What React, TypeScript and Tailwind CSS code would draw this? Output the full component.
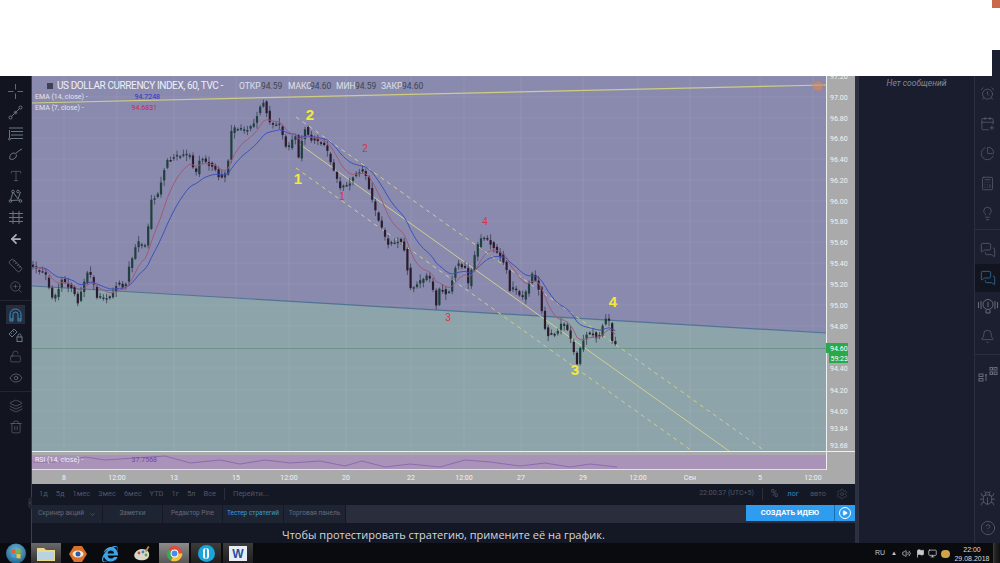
import {
  AlarmClock,
  ArrowLeft,
  Bell,
  Bug,
  Calculator,
  ChevronDown,
  ChevronLeft,
  CircleHelp,
  Eye,
  Layers,
  Lightbulb,
  LockOpen,
  MessagesSquare,
  PieChart,
  Play,
  Ruler,
  Settings,
  Trash2,
  Type,
  ZoomIn,
  CalendarPlus,
  Volume2,
  Flag,
  Monitor,
} from "lucide-react";
import { FaInternetExplorer } from "react-icons/fa";
import type { ReactNode } from "react";

// price path of the hourly candles, in chart pixels
const pricePath: [number, number][] = [
  [32, 266], [40, 271], [45, 273], [53, 302], [58, 290], [62, 280], [67, 285], [73, 289], [78, 302],
  [83, 285], [88, 270], [93, 282], [97, 298], [110, 298], [117, 283], [125, 287], [128, 270], [133, 255],
  [137, 242], [147, 247], [150, 200], [157, 198], [162, 177], [167, 160], [177, 155], [190, 155],
  [195, 178], [200, 158], [217, 170], [220, 180], [227, 170], [232, 127], [240, 130], [248, 130],
  [253, 125], [263, 100], [270, 123], [280, 125], [287, 152], [295, 133], [298, 162], [304, 127],
  [310, 138], [323, 143], [328, 153], [333, 170], [340, 188], [348, 185], [358, 170], [365, 172],
  [372, 200], [380, 225], [388, 245], [400, 240], [407, 255], [408, 290], [418, 283], [428, 275],
  [433, 290], [436, 308], [438, 290], [445, 290], [447, 300], [453, 275], [457, 262], [465, 268],
  [468, 285], [473, 262], [480, 238], [488, 240], [495, 250], [500, 255], [507, 270], [509, 290],
  [515, 287], [522, 300], [527, 290], [532, 275], [538, 285], [543, 320], [547, 335], [557, 332],
  [560, 325], [565, 323], [572, 345], [577, 365], [580, 350], [585, 335], [593, 333], [598, 340],
  [602, 325], [608, 315], [612, 340], [617, 348],
];

const rsiPath: [number, number][] = [
  [33, 462], [60, 462], [85, 457], [105, 460], [135, 458], [165, 456], [190, 463], [220, 460],
  [240, 464], [265, 460], [290, 463], [320, 461], [345, 466], [362, 461], [385, 467], [410, 464],
  [440, 467], [465, 460], [490, 462], [520, 466], [545, 463], [570, 467], [590, 464], [617, 467],
];

const yAt = (x: number) => {
  for (let i = 1; i < pricePath.length; i++) {
    const [x0, y0] = pricePath[i - 1];
    const [x1, y1] = pricePath[i];
    if (x <= x1) return y0 + ((y1 - y0) * (x - x0)) / (x1 - x0);
  }
  return pricePath[pricePath.length - 1][1];
};

// fixed wobble so the candles come out the same on every render
const wobble = (i: number) => Math.sin(i * 12.9898) * 0.5 + Math.sin(i * 4.1414) * 0.5;

const STEP = 3.2;

const candles = Array.from({ length: 183 }, (_, i) => {
  const x = 33 + i * STEP;
  const open = yAt(x - STEP) + wobble(i) * 2;
  const close = yAt(x) + wobble(i + 50) * 2;
  const top = Math.min(open, close) - 1 - Math.abs(wobble(i + 9)) * 5;
  const bottom = Math.max(open, close) + 1 + Math.abs(wobble(i + 23)) * 5;
  return { x, open, close, top, bottom };
});

const ema = (period: number) => {
  const k = 2 / (period + 1);
  let value = candles[0].close;
  return candles
    .map((c) => {
      value = value + (c.close - value) * k;
      return `${c.x},${value.toFixed(1)}`;
    })
    .join(" ");
};

const priceLabels: [string, number][] = [
  ["97.20", 76], ["97.00", 97], ["96.80", 118], ["96.60", 138], ["96.40", 159], ["96.20", 180],
  ["96.00", 201], ["95.80", 221], ["95.60", 242], ["95.40", 263], ["95.20", 284], ["95.00", 305],
  ["94.80", 326], ["94.40", 368], ["94.20", 390], ["94.00", 411], ["93.84", 428], ["93.68", 445],
];

const timeLabels: [string, number][] = [
  ["8", 64], ["12:00", 117], ["13", 174], ["15", 236], ["12:00", 289], ["20", 346], ["22", 411],
  ["12:00", 464], ["27", 521], ["29", 583], ["12:00", 638], ["Сен", 690], ["5", 760], ["12:00", 813],
];

const channels = [
  { x1: 296, y1: 117, x2: 765, y2: 451, dash: "4 4" },
  { x1: 298, y1: 143, x2: 729, y2: 451 },
  { x1: 296, y1: 168, x2: 692, y2: 451, dash: "4 4" },
];

const waveLabels = [
  { t: "1", x: 298, y: 184, big: true },
  { t: "2", x: 310, y: 120, big: true },
  { t: "3", x: 575, y: 375, big: true },
  { t: "4", x: 613, y: 307, big: true },
  { t: "1", x: 342, y: 200, big: false },
  { t: "2", x: 365, y: 152, big: false },
  { t: "3", x: 448, y: 321, big: false },
  { t: "4", x: 485, y: 225, big: false },
];

const PriceChart = () => (
  <svg width="823" height="408" viewBox="32 76 823 408" className="block">
    <rect x="32" y="76" width="823" height="408" fill="#aaaaaa" />
    <polygon points="32,76 826,76 826,333 32,286" fill="#8a8aae" />
    <polygon points="32,286 826,333 826,451 32,451" fill="#8da4aa" />

    {timeLabels.map(([, x], i) => (
      <line key={i} x1={x} y1="76" x2={x} y2="451" stroke="#ffffff" strokeOpacity="0.07" />
    ))}
    {priceLabels.map(([, y], i) => (
      <line key={i} x1="32" y1={y} x2="826" y2={y} stroke="#ffffff" strokeOpacity="0.06" />
    ))}

    <line x1="32" y1="286" x2="826" y2="333" stroke="#4f7396" strokeWidth="1.2" />
    <line x1="32" y1="348.5" x2="826" y2="348.5" stroke="#6d9488" />
    <line x1="32" y1="103" x2="826" y2="85" stroke="#cfcd82" strokeWidth="1.2" />
    <circle cx="818" cy="86" r="5" fill="#e08a50" fillOpacity="0.5" stroke="#d8744a" strokeOpacity="0.5" />

    {channels.map((c, i) => (
      <line
        key={i}
        x1={c.x1}
        y1={c.y1}
        x2={c.x2}
        y2={c.y2}
        stroke="#cfcf8e"
        strokeWidth="1"
        strokeDasharray={c.dash}
      />
    ))}

    {/* candles */}
    {candles.map((c) => {
      const rising = c.close < c.open;
      return (
        <g key={c.x}>
          <line x1={c.x} y1={c.top} x2={c.x} y2={c.bottom} stroke="#3a3f50" strokeWidth="0.8" />
          <rect
            x={c.x - 1.1}
            y={Math.min(c.open, c.close)}
            width="2.2"
            height={Math.max(Math.abs(c.open - c.close), 1.5)}
            fill={rising ? "#20403f" : "#2a1a2c"}
          />
        </g>
      );
    })}
    <polyline points={ema(18)} fill="none" stroke="#3f50bb" strokeWidth="1" />
    <polyline points={ema(9)} fill="none" stroke="#a05a78" strokeWidth="1" />

    {waveLabels.map((w, i) => (
      <text
        key={i}
        x={w.x}
        y={w.y}
        textAnchor="middle"
        fontFamily="'Liberation Sans', sans-serif"
        fontSize={w.big ? 15 : 10}
        fontWeight={w.big ? 700 : 400}
        fill={w.big ? "#f2e840" : "#dc3048"}
      >
        {w.t}
      </text>
    ))}

    {/* RSI pane */}
    <rect x="32" y="455" width="794" height="14" fill="#aa93b8" />
    <polyline
      points={rsiPath.map((p) => p.join(",")).join(" ")}
      fill="none"
      stroke="#8a6cae"
      strokeWidth="1"
    />
    <line x1="32" y1="451.5" x2="855" y2="451.5" stroke="#eef0f0" />
    <line x1="32" y1="469.5" x2="826" y2="469.5" stroke="#e2e2e2" />
    <line x1="826.5" y1="76" x2="826.5" y2="470" stroke="#eef0f0" />

    {/* axes */}
    {priceLabels.map(([label, y]) => (
      <text key={label} x="830" y={y + 3} fontSize="7" fill="#f2f2f2">
        {label}
      </text>
    ))}
    {timeLabels.map(([label, x], i) => (
      <text key={i} x={x} y="480" fontSize="7" fill="#f2f2f2" textAnchor="middle">
        {label}
      </text>
    ))}
    <rect x="826" y="343" width="22" height="10" fill="#2aa84a" />
    <rect x="829" y="353" width="19" height="10" fill="#2aa84a" />
    <text x="830" y="351" fontSize="7" fill="#ffffff">94.60</text>
    <text x="830.5" y="361" fontSize="7" fill="#ffffff">59:23</text>
  </svg>
);

const ChartLegend = () => (
  <>
    <div className="absolute left-[15px] top-[4px] flex items-center whitespace-nowrap text-[8.5px] leading-[12px]">
      <span className="mr-[4px] h-[6px] w-[6px] bg-[#3d4252]" />
      <span className="w-[182px] text-[10px] tracking-[-0.4px] text-[#eef0f6]">US DOLLAR CURRENCY INDEX, 60, TVC -</span>
      <span className="w-[22px] text-[#dfe0ea]">ОТКР</span>
      <span className="w-[27px] text-[#3e4656]">94.59</span>
      <span className="w-[22px] text-[#dfe0ea]">МАКС</span>
      <span className="w-[26px] text-[#3e4656]">94.60</span>
      <span className="w-[19px] text-[#dfe0ea]">МИН</span>
      <span className="w-[26px] text-[#3e4656]">94.59</span>
      <span className="w-[21px] text-[#dfe0ea]">ЗАКР</span>
      <span className="text-[#3e4656]">94.60</span>
    </div>
    <div className="absolute left-[3px] top-[17px] flex w-[140px] justify-between text-[7px] leading-[9px] text-[#e4e4ee]">
      <span>EMA (14, close) -</span>
      <span className="mr-[15px] text-[#2a35c8]">94.7248</span>
    </div>
    <div className="absolute left-[3px] top-[28px] flex w-[140px] justify-between text-[7px] leading-[9px] text-[#e4e4ee]">
      <span>EMA (7, close) -</span>
      <span className="mr-[18px] text-[#c22a4e]">94.6831</span>
    </div>
    <div className="absolute left-[3px] top-[380px] flex w-[122px] justify-between text-[7px] leading-[9px] text-[#f0f0f6]">
      <span>RSI (14, close) -</span>
      <span className="text-[#7a3fb0]">37.7568</span>
    </div>
  </>
);

const ToolIcon = ({ children, active }: { children: ReactNode; active?: boolean }) => (
  <div className="flex h-[21px] w-full items-center justify-center">
    <div
      className={`flex h-[19px] w-[19px] items-center justify-center ${
        active ? "bg-[#262d3c] text-[#3f8fc0]" : "text-[#6b7685]"
      }`}
    >
      {children}
    </div>
  </div>
);

const Crosshair = () => (
  <svg width="15" height="15" viewBox="0 0 15 15" stroke="#2b7f95" fill="none">
    <path d="M7.5 0v5.5M7.5 9.5V15M0 7.5h5.5M9.5 7.5H15" />
  </svg>
);

const TrendLine = () => (
  <svg width="15" height="15" viewBox="0 0 15 15" stroke="currentColor" fill="none">
    <path d="M3.5 11.5l8-8" />
    <circle cx="2.5" cy="12.5" r="1.5" />
    <circle cx="12.5" cy="2.5" r="1.5" />
    <circle cx="7.5" cy="7.5" r="1.3" />
  </svg>
);

const FibLines = () => (
  <svg width="16" height="15" viewBox="0 0 16 15" stroke="currentColor" fill="none">
    <path d="M1 2h14M3 5.5h12M3 9h12M3 12.5h12" />
    <path d="M1.5 4v8" />
    <circle cx="1.5" cy="13" r="1" />
  </svg>
);

const Brush = () => (
  <svg width="15" height="13" viewBox="0 0 15 13" stroke="currentColor" fill="none">
    <path d="M2 11c-1-3 1-6 4-6 2 0 3 2 2 4-1 2-4 3-6 2zM8 5l4-3 2-1" />
  </svg>
);

const PatternTool = () => (
  <svg width="15" height="15" viewBox="0 0 15 15" stroke="currentColor" fill="none">
    <path d="M2.5 11.5L5 3l5 7 2.5-7M2.5 11.5L12.5 11" />
    <circle cx="2.5" cy="12" r="1.3" />
    <circle cx="5" cy="2.5" r="1.3" />
    <circle cx="10" cy="2.5" r="1.3" />
    <circle cx="12.5" cy="12" r="1.3" />
  </svg>
);

const ForecastTool = () => (
  <svg width="16" height="15" viewBox="0 0 16 15" stroke="currentColor" fill="none">
    <path d="M1 3.5h14M1 7.5h14M1 11.5h14M5 1v13M11 1v13" />
  </svg>
);

const DrawLock = () => (
  <svg width="15" height="15" viewBox="0 0 15 15" stroke="currentColor" fill="none">
    <path d="M1 6l5-5 3 3-5 5zM2.5 4.5L4 6M4.5 2.5L6 4" />
    <rect x="9" y="9" width="5" height="4.5" />
    <path d="M10 9V7.5a1.5 1.5 0 013 0V9" />
  </svg>
);

const MagnetArch = () => (
  <svg width="13" height="14" viewBox="0 0 13 14" stroke="currentColor" fill="none">
    <path d="M1 13V6.5a5.5 5.5 0 0111 0V13H9V6.5a2.5 2.5 0 00-5 0V13z" />
    <path d="M1 11h3M9 11h3" />
  </svg>
);

const LeftToolbar = () => (
  <div className="flex w-8 shrink-0 flex-col border-r border-[#3a3f4d] bg-[#12151f] pt-[5px]">
    <ToolIcon><Crosshair /></ToolIcon>
    <ToolIcon><TrendLine /></ToolIcon>
    <ToolIcon><FibLines /></ToolIcon>
    <ToolIcon><Brush /></ToolIcon>
    <ToolIcon><Type size={14} strokeWidth={1} /></ToolIcon>
    <ToolIcon><PatternTool /></ToolIcon>
    <ToolIcon><ForecastTool /></ToolIcon>
    <ToolIcon><ArrowLeft size={14} strokeWidth={3} className="text-[#aab2bc]" /></ToolIcon>
    <div className="mt-[6px]">
      <ToolIcon><Ruler size={15} strokeWidth={1} className="text-[#7b8592]" /></ToolIcon>
      <ToolIcon><ZoomIn size={14} strokeWidth={1} /></ToolIcon>
    </div>
    <div className="mt-[3px] border-t border-[#232733] pt-[3px]">
      <ToolIcon active><MagnetArch /></ToolIcon>
      <ToolIcon><DrawLock /></ToolIcon>
      <ToolIcon><LockOpen size={13} strokeWidth={1} /></ToolIcon>
      <ToolIcon><Eye size={14} strokeWidth={1} className="text-[#7b8592]" /></ToolIcon>
    </div>
    <div className="mt-[3px] border-t border-[#232733] pt-[3px]">
      <ToolIcon><Layers size={14} strokeWidth={1} /></ToolIcon>
      <ToolIcon><Trash2 size={14} strokeWidth={1} /></ToolIcon>
    </div>
  </div>
);

const ChartControls = () => (
  <div className="relative flex h-[19px] items-center bg-[#141824] pl-[7px] pr-[7px] text-[7.5px] text-[#4f5664]">
    <div className="flex gap-[8px] pr-[8px]">
      {["1д", "5д", "1мес", "3мес", "6мес", "YTD", "1г", "5л", "Все"].map((r) => (
        <span key={r}>{r}</span>
      ))}
    </div>
    <span className="h-[12px] border-l border-[#2a2e3b]" />
    <span className="ml-[8px]">Перейти...</span>
    <span className="ml-auto text-[7px]">22:00:37 (UTC+5)</span>
    <span className="ml-[8px] h-[12px] border-l border-[#2a2e3b]" />
    <span className="ml-[8px] text-[10px]">%</span>
    <span className="ml-[9px] text-[#2f83ba]">лог</span>
    <span className="ml-[11px]">авто</span>
    <Settings size={12} strokeWidth={1} className="ml-[10px]" />
    <div className="absolute bottom-[-6px] left-[-4px] flex h-[12px] w-[4px] items-center justify-center rounded-l-sm bg-[#232733]">
      <ChevronLeft size={6} className="text-[#8a909c]" />
    </div>
  </div>
);

const tabs = [
  { label: "Скринер акций", w: "w-[71px]", more: true },
  { label: "Заметки", w: "w-[60px]" },
  { label: "Редактор Pine", w: "w-[60px]" },
  { label: "Тестер стратегий", w: "w-[61px]", active: true },
  { label: "Торговая панель", w: "w-[62px]" },
];

const BottomTabs = () => (
  <div className="mt-[2px] flex h-[18px] items-stretch bg-[#2a2e3c]">
    {tabs.map((t) => (
      <div
        key={t.label}
        className={`flex ${t.w} items-center justify-center gap-[5px] whitespace-nowrap border-r border-[#141824] bg-[#1f2433] text-[6.5px] ${
          t.active ? "text-[#3b9ad8]" : "text-[#646b7a]"
        }`}
      >
        {t.label}
        {t.more && <ChevronDown size={7} />}
      </div>
    ))}
    <div className="ml-auto flex h-[16px] text-white">
      <div className="flex w-[88px] items-center justify-center bg-[#2e9df0] text-[7.5px] font-bold">
        СОЗДАТЬ ИДЕЮ
      </div>
      <div className="flex w-[21px] items-center justify-center border-l border-[#1c6fae] bg-[#2e9df0]">
        <span className="flex h-[12px] w-[12px] items-center justify-center rounded-full border border-white">
          <Play size={6} fill="white" />
        </span>
      </div>
    </div>
  </div>
);

const SideIcon = ({
  children,
  active,
  height = "h-[30px]",
}: {
  children: ReactNode;
  active?: boolean;
  height?: string;
}) => (
  <div
    className={`flex ${height} items-center justify-center ${
      active ? "bg-[#12141f] text-[#3a86bd]" : "text-[#656b7b]"
    }`}
  >
    {children}
  </div>
);

const SignalBulb = () => (
  <svg width="22" height="16" viewBox="0 0 22 16" stroke="currentColor" fill="none">
    <circle cx="11" cy="6.5" r="5" />
    <path d="M9 12v3h4v-3M11 4v5M1.5 4v6M4 3v8M20.5 4v6M18 3v8" />
  </svg>
);

const TreeIcon = () => (
  <svg width="20" height="16" viewBox="0 0 20 16" stroke="currentColor" fill="none">
    <rect x="1" y="8" width="4" height="2.5" />
    <rect x="1" y="12.5" width="4" height="2.5" />
    <rect x="12" y="1.5" width="2.5" height="2.5" />
    <rect x="16" y="1.5" width="3" height="2.5" />
    <rect x="12" y="6" width="2.5" height="2.5" />
    <rect x="16" y="6" width="3" height="2.5" />
    <path d="M7 9h2M8 8v7" />
  </svg>
);

const RightBar = () => (
  <div className="flex w-[26px] shrink-0 flex-col border-l border-[#2a2e3f] bg-[#1c1f2f] pt-[2px]">
    <SideIcon><AlarmClock size={15} strokeWidth={1} /></SideIcon>
    <SideIcon><CalendarPlus size={15} strokeWidth={1} /></SideIcon>
    <SideIcon><PieChart size={15} strokeWidth={1} /></SideIcon>
    <SideIcon><Calculator size={15} strokeWidth={1} /></SideIcon>
    <SideIcon><Lightbulb size={15} strokeWidth={1} /></SideIcon>
    <div className="mt-[1px] border-t border-[#2a2e3f] pt-[6px]">
      <SideIcon height="h-[28px]"><MessagesSquare size={16} strokeWidth={1} /></SideIcon>
      <SideIcon height="h-[28px]" active><MessagesSquare size={16} strokeWidth={1} /></SideIcon>
      <SideIcon height="h-[28px]"><SignalBulb /></SideIcon>
      <SideIcon height="h-[32px]"><Bell size={15} strokeWidth={1} /></SideIcon>
    </div>
    <div className="mt-[2px] border-t border-[#2a2e3f] pt-[4px]">
      <SideIcon><TreeIcon /></SideIcon>
    </div>
    <div className="mt-auto">
      <SideIcon><Bug size={17} strokeWidth={1} /></SideIcon>
      <SideIcon><CircleHelp size={16} strokeWidth={1} /></SideIcon>
    </div>
  </div>
);

const TaskButton = ({ children, tone }: { children: ReactNode; tone?: string }) => (
  <div className={`mr-[2px] flex h-[21px] w-[30px] items-center justify-center ${tone ?? ""}`}>
    {children}
  </div>
);

const StartOrb = () => (
  <svg width="22" height="21" viewBox="0 0 22 21">
    <defs>
      <radialGradient id="orb" cx="50%" cy="35%" r="70%">
        <stop offset="0%" stopColor="#6fb6d8" />
        <stop offset="100%" stopColor="#1d5f8c" />
      </radialGradient>
    </defs>
    <circle cx="11" cy="10.5" r="10" fill="url(#orb)" />
    <path d="M6.5 7l4-1v4h-4z" fill="#e2632f" />
    <path d="M11.5 6l4-.5V10h-4z" fill="#7cb63c" />
    <path d="M6.5 11h4v4l-4-1z" fill="#3ea2dc" />
    <path d="M11.5 11h4v4.5l-4-.5z" fill="#eec43a" />
  </svg>
);

const ChromeLogo = () => (
  <svg width="17" height="17" viewBox="0 0 24 24">
    <circle cx="12" cy="12" r="11" fill="#dd4b3e" />
    <path d="M12 12L2.5 6.5A11 11 0 007 21.8z" fill="#3aa757" />
    <path d="M12 12l-5 9.8A11 11 0 0023 12z" fill="#f5c33b" />
    <circle cx="12" cy="12" r="5.5" fill="#ffffff" />
    <circle cx="12" cy="12" r="4.2" fill="#4a8af0" />
  </svg>
);

const Taskbar = () => (
  <div className="flex h-[21px] shrink-0 items-center bg-[#0a0b0f] font-['Liberation_Sans',sans-serif]">
    <div className="flex w-[31px] justify-center">
      <StartOrb />
    </div>
    <TaskButton tone="bg-gradient-to-b from-[#6a6a6a] to-[#2f2f2f]">
      <svg width="20" height="16" viewBox="0 0 20 16">
        <path d="M1 2h7l2 2h9v11H1z" fill="#eed98a" />
        <path d="M2 6h16v8H2z" fill="#b9d3e2" />
      </svg>
    </TaskButton>
    <TaskButton>
      <svg width="18" height="16" viewBox="0 0 18 16">
        <path d="M5 0h8l5 8-5 8H5L0 8z" fill="#d9702c" />
        <ellipse cx="9" cy="8" rx="5.5" ry="3.5" fill="#f4ead8" />
        <circle cx="9" cy="8" r="2.5" fill="#2d5ba8" />
      </svg>
    </TaskButton>
    <TaskButton>
      <FaInternetExplorer size={16} className="text-[#3aa6e6]" />
    </TaskButton>
    <TaskButton>
      <svg width="18" height="16" viewBox="0 0 18 16">
        <path d="M9 3c5 0 8 3 7 7-1 4-6 5-10 4S0 10 2 7c1-2 4-4 7-4z" fill="#d9d6c8" />
        <circle cx="6" cy="7" r="1.4" fill="#c9503a" />
        <circle cx="10" cy="6" r="1.4" fill="#3f7fbf" />
        <circle cx="13" cy="9" r="1.4" fill="#5fa04a" />
        <path d="M12 5l3-5 1.5 1-3 5z" fill="#b98a4a" />
      </svg>
    </TaskButton>
    <TaskButton tone="bg-gradient-to-b from-[#8c8c8c] to-[#555555]"><ChromeLogo /></TaskButton>
    <TaskButton tone="bg-gradient-to-b from-[#3c3c3c] to-[#1e1e1e]">
      <span className="flex h-[17px] w-[17px] items-center justify-center rounded-full bg-[#1aa6dc]">
        <span className="h-[11px] w-[6px] rounded-full border-x-2 border-white" />
      </span>
    </TaskButton>
    <TaskButton tone="bg-gradient-to-b from-[#3c3c3c] to-[#1e1e1e]">
      <span className="flex h-[15px] w-[18px] items-center justify-center bg-[#e8edf5] text-[12px] font-bold leading-none text-[#23509e]">
        W
      </span>
    </TaskButton>
    <div className="ml-auto flex items-center text-[#c5c8cc]">
      <span className="w-[14px] text-[7px]">RU</span>
      <span className="ml-[2px] w-[8px] text-[6px]">▲</span>
      <Volume2 size={9} className="ml-[3px]" />
      <Flag size={9} className="ml-[5px]" fill="currentColor" />
      <Monitor size={9} className="ml-[3px]" />
      <span className="ml-[4px] h-[8px] w-[9px] rounded-sm bg-[#d2a24a]" />
      <div className="ml-[4px] flex w-[36px] flex-col items-center text-[7px] leading-[9px] text-[#d8dade]">
        <span>22:00</span>
        <span>29.08.2018</span>
      </div>
      <span className="ml-[3px] h-[21px] w-[7px] border-l border-[#3c3c3c] bg-gradient-to-r from-[#2a2a2a] to-[#111111]" />
    </div>
  </div>
);

const App = () => (
  <div className="flex h-[563px] w-[1000px] flex-col overflow-hidden bg-[#141724] font-['Roboto',sans-serif]">
    <div className="flex h-[76px] shrink-0">
      <div className="w-[992px] bg-white" />
      <div className="flex flex-1 flex-col">
        <div className="h-[8px] bg-[#c9694a]" />
        <div className="h-[42px] bg-white" />
        <div className="flex-1 bg-[#1c1f2f]" />
      </div>
    </div>

    <div className="flex flex-1">
      <LeftToolbar />
      <div className="flex w-[823px] shrink-0 flex-col">
        <div className="relative h-[408px]">
          <PriceChart />
          <ChartLegend />
        </div>
        <ChartControls />
        <BottomTabs />
        <div className="flex-1 pt-[4px] text-center font-['Open_Sans',sans-serif] text-[11px] leading-[16px] text-[#d6d8dd]">
          Чтобы протестировать стратегию, примените её на график.
        </div>
      </div>
      <div className="w-[4px] shrink-0 bg-[#2d3040]" />
      <div className="w-[115px] shrink-0 bg-[#1a1d2d] pt-[2px] text-center text-[8.5px] italic leading-[11px] text-[#868a99]">
        Нет сообщений
      </div>
      <RightBar />
    </div>

    <Taskbar />
  </div>
);

export default App;
